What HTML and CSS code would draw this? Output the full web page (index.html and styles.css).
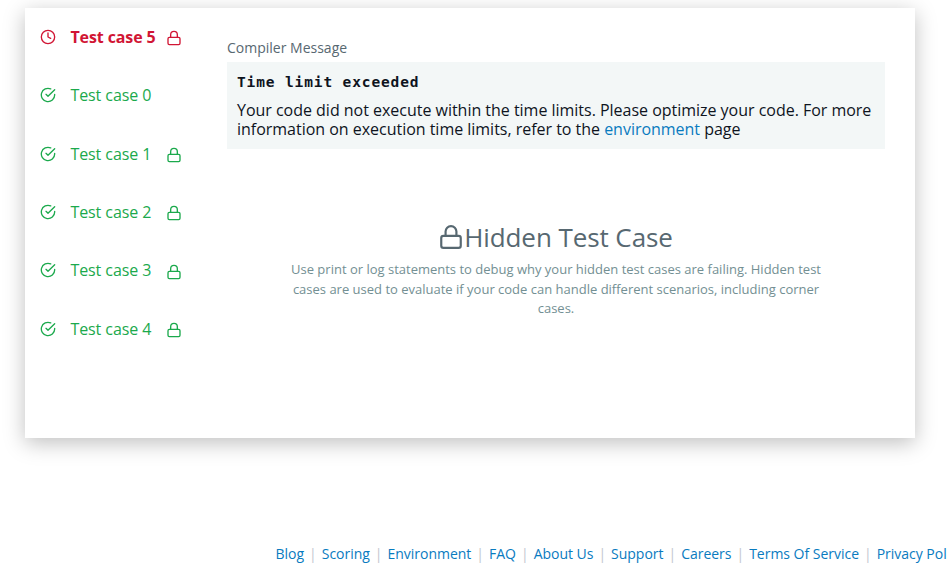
FILE: index.html
```html
<!DOCTYPE html>
<html lang="en">
<head>
<meta charset="utf-8">
<title>Test results</title>
<link rel="stylesheet" href="styles.css">
</head>
<body>
<svg class="sprite" aria-hidden="true">
  <symbol id="clock" viewBox="0 0 24 24"><circle cx="12" cy="12" r="10"/><path d="M12 6v6l4 2"/></symbol>
  <symbol id="check" viewBox="0 0 24 24"><path d="M22 11.080V12a10 10 0 1 1-5.930-9.140"/><path d="M22 4L12 14.010l-3-3"/></symbol>
  <symbol id="lock" viewBox="0 0 24 24"><rect x="3" y="11" width="18" height="11" rx="2"/><path d="M7 11V7a5 5 0 0 1 10 0v4"/></symbol>
</svg>
<main class="card">
  <ul class="cases">
    <li class="case failed"><svg class="status"><use href="#clock"/></svg><span>Test case 5</span><svg class="lock"><use href="#lock"/></svg></li>
    <li class="case"><svg class="status"><use href="#check"/></svg><span>Test case 0</span></li>
    <li class="case"><svg class="status"><use href="#check"/></svg><span>Test case 1</span><svg class="lock"><use href="#lock"/></svg></li>
    <li class="case"><svg class="status"><use href="#check"/></svg><span>Test case 2</span><svg class="lock"><use href="#lock"/></svg></li>
    <li class="case"><svg class="status"><use href="#check"/></svg><span>Test case 3</span><svg class="lock"><use href="#lock"/></svg></li>
    <li class="case"><svg class="status"><use href="#check"/></svg><span>Test case 4</span><svg class="lock"><use href="#lock"/></svg></li>
  </ul>
  <section class="details">
    <div class="label">Compiler Message</div>
    <div class="message">
      <div class="title">Time limit exceeded</div>
      <p>Your code did not execute within the time limits. Please optimize your code. For more information on execution time limits, refer to the <a href="#">environment</a> page</p>
    </div>
    <div class="hidden-case">
      <h2><svg class="big-lock"><use href="#lock"/></svg>Hidden Test Case</h2>
      <p>Use print or log statements to debug why your hidden test cases are failing. Hidden test cases are used to evaluate if your code can handle different scenarios, including corner cases.</p>
    </div>
  </section>
</main>
<footer class="footer">
  <a href="#">Blog</a><i>|</i><a href="#">Scoring</a><i>|</i><a href="#">Environment</a><i>|</i><a href="#">FAQ</a><i>|</i><a href="#">About Us</a><i>|</i><a href="#">Support</a><i>|</i><a href="#">Careers</a><i>|</i><a href="#">Terms Of Service</a><i>|</i><a href="#">Privacy Policy</a>
</footer>
</body>
</html>
```
FILE: styles.css
```css
* { box-sizing: border-box; }
body { margin: 0; overflow: hidden; background: #fff; font-family: "Open Sans", "Noto Sans", sans-serif; color: #0e141e; }
a { color: #097bbf; text-decoration: none; }
.sprite { position: absolute; width: 0; height: 0; }
svg { fill: none; stroke: currentColor; stroke-width: 2; stroke-linecap: round; stroke-linejoin: round; flex: none; }
.card { display: flex; width: 890px; height: 430px; margin: 8px 0 0 25px; background: #fff; box-shadow: 0 5px 20px rgba(0, 0, 0, .25); }
.cases { list-style: none; margin: 0; padding: 0 0 0 15px; width: 202px; }
.case { display: flex; align-items: center; height: 58.3px; color: #1ba94c; font-size: 16px; }
.case span { width: 96px; letter-spacing: -.07px; }
.failed { color: #d11534; }
.failed span { font-weight: 700; letter-spacing: -.1px; white-space: nowrap; }
.status { width: 16px; height: 16px; margin-right: 14.4px; }
.lock { width: 16px; height: 16px; margin: 2.4px 0 0 -.4px; }
.details { width: 658px; padding-top: 30px; }
.label { height: 24px; font-size: 14px; line-height: 20px; color: #576871; }
.message { height: 87px; padding: 10px; background: #f3f7f7; }
.title { font: 700 14.5px/20px "DejaVu Sans Mono", monospace; letter-spacing: .87px; }
.message p { margin: 9px 0 0; font-size: 16px; line-height: 19px; letter-spacing: -.02px; }
.hidden-case { margin: 68px auto 0; width: 550px; text-align: center; color: #576871; }
.hidden-case h2 { display: flex; justify-content: center; align-items: center; margin: 0; font-size: 26px; line-height: 40px; font-weight: 400; letter-spacing: -.08px; }
.big-lock { width: 26px; height: 26px; margin-left: -1px; }
.hidden-case p { margin: 3px 0 0; font-size: 13px; line-height: 19.500px; color: #738f93; }
.footer { display: flex; margin: 106px 0 0 275.5px; white-space: nowrap; font-size: 14px; line-height: 20px; }
.footer a { flex: none; letter-spacing: -.02px; }
.footer i { flex: none; width: 17.7px; text-align: center; font-style: normal; color: #c2c7d0; }
```
